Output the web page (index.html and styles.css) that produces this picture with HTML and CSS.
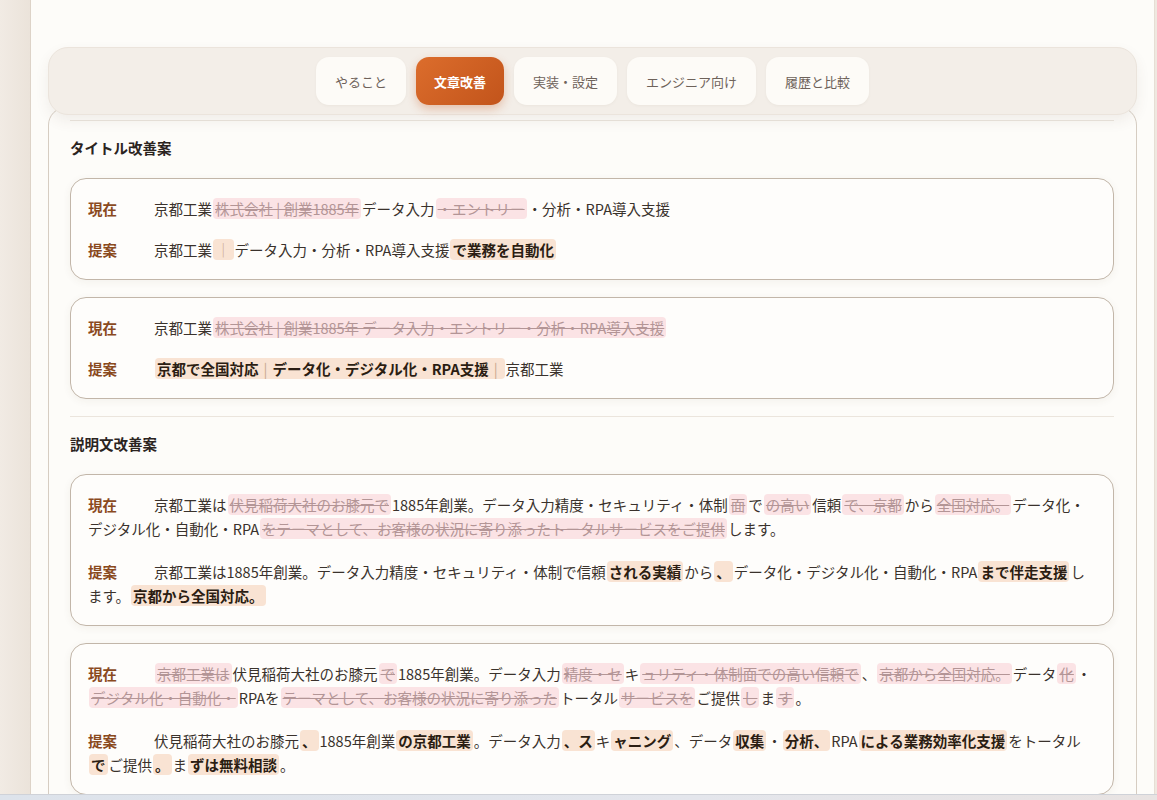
FILE: index.html
```html
<!DOCTYPE html>
<html lang="ja">

<head>
    <meta charset="UTF-8">
    <meta name="viewport" content="width=device-width, initial-scale=1.0">
    <title>文章改善</title>
    <link rel="stylesheet" href="styles.css">
</head>

<body>
    <div class="screen">
        <div class="gutter"></div>
        <main class="panel">
            <nav class="tabbar">
                <button class="tab">やること</button>
                <button class="tab active">文章改善</button>
                <button class="tab">実装・設定</button>
                <button class="tab">エンジニア向け</button>
                <button class="tab">履歴と比較</button>
            </nav>

            <section class="content">
                <div class="divider"></div>
                <h2 class="section-title">タイトル改善案</h2>

                <div class="diff-card">
                    <div class="row">
                        <span class="label">現在</span>
                        <span class="text">京都工業<span class="del">株式会社 | 創業1885年</span>データ入力<span class="del">・エントリー</span>・分析・RPA導入支援</span>
                    </div>
                    <div class="row">
                        <span class="label">提案</span>
                        <span class="text">京都工業<span class="ins pipe">｜</span>データ入力・分析・RPA導入支援<span class="ins">で業務を自動化</span></span>
                    </div>
                </div>

                <div class="diff-card">
                    <div class="row">
                        <span class="label">現在</span>
                        <span class="text">京都工業<span class="del">株式会社 | 創業1885年 データ入力・エントリー・分析・RPA導入支援</span></span>
                    </div>
                    <div class="row">
                        <span class="label">提案</span>
                        <span class="text"><span class="ins">京都で全国対応<span class="sep">|</span>データ化・デジタル化・RPA支援<span class="sep">|</span></span>京都工業</span>
                    </div>
                </div>

                <div class="divider"></div>
                <h2 class="section-title">説明文改善案</h2>

                <div class="diff-card">
                    <p class="para"><span class="label">現在</span>京都工業は<span class="del">伏見稲荷大社のお膝元で</span>1885年創業。データ入力精度・セキュリティ・体制<span class="del">面</span>で<span class="del">の高い</span>信頼<span class="del">で、京都</span>から<span class="del">全国対応。</span>データ化・デジタル化・自動化・RPA<span class="del">をテーマとして、お客様の状況に寄り添ったトータルサービスをご提供</span>します。</p>
                    <p class="para"><span class="label">提案</span>京都工業は1885年創業。データ入力精度・セキュリティ・体制で信頼<span class="ins">される実績</span>から<span class="ins">、</span>データ化・デジタル化・自動化・RPA<span class="ins">まで伴走支援</span>します。<span class="ins">京都から全国対応。</span></p>
                </div>

                <div class="diff-card">
                    <p class="para"><span class="label">現在</span><span class="del">京都工業は</span>伏見稲荷大社のお膝元<span class="del">で</span>1885年創業。データ入力<span class="del">精度・セ</span>キ<span class="del">ュリティ・体制面での高い信頼で</span>、<span class="del">京都から全国対応。</span>データ<span class="del">化</span>・<span class="del">デジタル化・自動化・</span>RPAを<span class="del">テーマとして、お客様の状況に寄り添った</span>トータル<span class="del">サービスを</span>ご提供<span class="del">し</span>ま<span class="del">す</span>。</p>
                    <p class="para"><span class="label">提案</span>伏見稲荷大社のお膝元<span class="ins">、</span>1885年創業<span class="ins">の京都工業</span>。データ入力<span class="ins">、ス</span>キ<span class="ins">ャニング</span>、データ<span class="ins">収集</span>・<span class="ins">分析、</span>RPA<span class="ins">による業務効率化支援</span>をトータル<span class="ins">で</span>ご提供<span class="ins">。</span>ま<span class="ins">ずは無料相談</span>。</p>
                </div>
            </section>
        </main>
    </div>
    <div class="taskbar"></div>
</body>

</html>
```

FILE: styles.css
```css
body {
    margin: 0;
    height: 800px;
    overflow: hidden;
    background-color: #efe8e0;
    font-family: "Noto Sans CJK JP", "Noto Sans", sans-serif;
    color: #3a322c;
}

.screen {
    display: flex;
    height: 794px;
}

.gutter {
    width: 30px;
    flex: none;
    background: linear-gradient(90deg, #f1ebe4, #ebe3da);
}

.panel {
    width: 1089px;
    flex: none;
    padding: 47px 17px 0;
    background-color: #fdfcf9;
    border-left: 1px solid #ddd3c8;
    border-right: 1px solid #e6ded4;
    overflow: hidden;
}

/* onglets */
.tabbar {
    position: relative;
    z-index: 1;
    display: flex;
    justify-content: center;
    gap: 10px;
    padding: 9px;
    background-color: #f3eee8;
    border: 1px solid #ebe4dc;
    border-radius: 20px;
    box-shadow: 0 6px 14px rgba(90, 70, 50, 0.08);
}

.tab {
    height: 48px;
    padding: 0 19px;
    border: none;
    border-radius: 13px;
    background-color: #fdfbf7;
    font-family: inherit;
    font-size: 13px;
    color: #6e625a;
    box-shadow: 0 1px 3px rgba(90, 70, 50, 0.05);
    cursor: pointer;
}

.tab.active {
    padding: 0 18px;
    background: linear-gradient(135deg, #dc6d2c, #c2541b);
    color: #ffffff;
    font-weight: 700;
    box-shadow: 0 4px 10px rgba(194, 84, 27, 0.3);
}

/* contenu */
.content {
    margin-top: -8px;
    padding: 12px 22px 0 21px;
    background-color: #fdfcf9;
    border: 1px solid #d6cdc2;
    border-radius: 18px;
}

.divider {
    height: 1px;
    background-color: #ebe5dd;
}

.section-title {
    margin: 17px 0 20px;
    font-size: 14.5px;
    line-height: 20px;
    font-weight: 700;
    color: #2b241f;
}

.diff-card {
    margin-bottom: 17px;
    padding: 17.5px 14px 17.5px 17px;
    background-color: #fefdfb;
    border: 1.5px solid #c2b6a9;
    border-radius: 16px;
    box-shadow: 0 2px 8px rgba(80, 60, 40, 0.06);
    font-size: 14.5px;
    line-height: 24px;
}

.row {
    display: flex;
}

.row + .row {
    margin-top: 17px;
}

.label {
    display: inline-block;
    width: 66px;
    flex: none;
    font-weight: 700;
    color: #8a4a1e;
}

.para {
    margin: 0;
}

.para + .para {
    margin-top: 19px;
}

.del,
.ins {
    padding: 0 2px;
    margin: 0 1px;
    border-radius: 4px;
}

.del {
    background-color: #fbe3e5;
    color: #b39596;
    text-decoration: line-through;
}

.ins {
    background-color: #f9e3d3;
    color: #2b1d12;
    font-weight: 700;
}

.ins.pipe {
    padding: 0 3px;
    font-weight: 400;
    color: #c9a990;
}

.sep {
    margin: 0 5px;
    font-weight: 400;
    color: #c9a990;
}

.taskbar {
    height: 5px;
    border-top: 1px solid #cfd2d8;
    background: linear-gradient(90deg, #dde3eb, #e4e6ec 60%, #e8e3e2);
}
```
